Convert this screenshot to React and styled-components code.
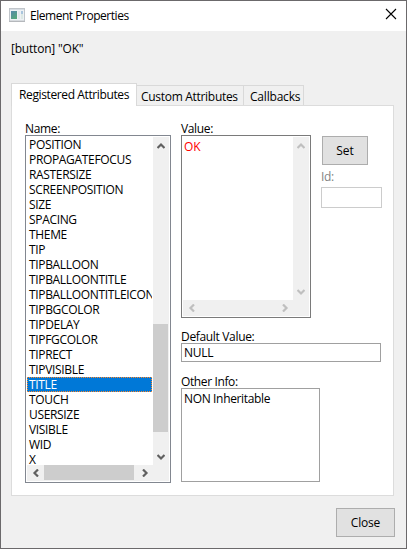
import React from "react";
import styled, { createGlobalStyle } from "styled-components";

const GlobalStyle = createGlobalStyle`
  * { box-sizing: border-box; }
  body { margin: 0; overflow: hidden; }
`;

const Window = styled.div`
  width: 407px;
  height: 549px;
  display: flex;
  flex-direction: column;
  background: #f0f0f0;
  border: 1px solid #6b696b;
  font: 12px/15px "Open Sans", "Noto Sans", sans-serif;
  color: #000;
`;

const Text = styled.span`
  display: block;
  white-space: pre;
  letter-spacing: ${(p) => p.$spacing || 0}px;
`;

const TitleBar = styled.header`
  height: 30px;
  flex: none;
  display: flex;
  align-items: flex-start;
  background: #fff;
  padding: 7px 9px 0 8px;
`;

const WindowTitle = styled(Text)`
  margin: 0 auto 0 5px;
`;

const ElementName = styled(Text)`
  margin: 10px 0 0 10px;
  height: 15px;
`;

const TabStrip = styled.nav`
  display: flex;
  align-items: flex-end;
  margin: 27px 0 0 10px;
  height: 22px;
`;

const Tab = styled.div`
  width: ${(p) => p.$width}px;
  height: ${(p) => (p.$active ? 23 : 20)}px;
  margin-bottom: ${(p) => (p.$active ? -1 : 0)}px;
  padding: 3px 0 0 ${(p) => p.$inset}px;
  background: ${(p) => (p.$active ? "#fff" : "#f0f0f0")};
  border: 1px solid #d9d9d9;
  border-bottom: 0;
  border-left-width: ${(p) => (p.$active ? 1 : 0)}px;
  position: relative;
`;

const Page = styled.main`
  width: 383px;
  height: 391px;
  flex: none;
  margin-left: 10px;
  border: 1px solid #dcdcdc;
  background: #fff;
  display: flex;
  padding: 15px 0 0 13px;
`;

const NameColumn = styled.section`
  width: 156px;
  flex: none;
`;

const DetailColumn = styled.section`
  flex: 1;
  min-width: 0;
`;

const Label = styled(Text)`
  height: 14px;
  line-height: 15px;
  color: ${(p) => (p.$disabled ? "#838383" : "#000")};
`;

const ScrollBox = styled.div`
  display: grid;
  grid-template-columns: 1fr 16px;
  grid-template-rows: 1fr 16px;
  width: ${(p) => p.$width}px;
  height: ${(p) => p.$height}px;
  border: 1px solid ${(p) => p.$border};
  padding: 1px;
  background: #fff;
`;

const List = styled.ul`
  list-style: none;
  margin: 0;
  padding: 0;
  overflow: hidden;
  min-width: 0;
  min-height: 0;
`;

const Item = styled.li`
  height: 15px;
  width: 125px;
  overflow: hidden;
  padding-left: 2px;
  color: ${(p) => (p.$selected ? "#fff" : "#000")};
  background: ${(p) => (p.$selected ? "#0078d7" : "transparent")};
  outline: ${(p) => (p.$selected ? "1px dotted #ff8728" : "none")};
  outline-offset: -1px;
`;

const VerticalBar = styled.div`
  display: flex;
  flex-direction: column;
  justify-content: space-between;
  align-items: flex-start;
  background: #f0f0f0;
  color: ${(p) => (p.$disabled ? "#bfbfbf" : "#606060")};
`;

const HorizontalBar = styled.div`
  display: flex;
  justify-content: space-between;
  align-items: flex-start;
  background: #f0f0f0;
  color: ${(p) => (p.$disabled ? "#bfbfbf" : "#606060")};
`;

const ArrowSlot = styled.span`
  width: ${(p) => (p.$vertical ? 15 : 17)}px;
  height: ${(p) => (p.$vertical ? 17 : 15)}px;
  flex: none;
  display: flex;
  align-items: center;
  justify-content: center;
`;

const VerticalThumb = styled.div`
  width: 15px;
  height: 108px;
  margin: 170px 0 auto;
  background: #cdcdcd;
`;

const HorizontalThumb = styled.div`
  width: 90px;
  height: 15px;
  margin-right: auto;
  background: #cdcdcd;
`;

const Corner = styled.div`
  background: #f0f0f0;
`;

const ValueText = styled(Text)`
  padding: 2px 0 0 1px;
  color: #ff0000;
`;

const ValueRow = styled.div`
  display: flex;
`;

const ValueField = styled.div`
  width: 140px;
  flex: none;
`;

const ValueActions = styled.div`
  padding-top: 15px;
`;

const Button = styled.button`
  width: ${(p) => p.$width}px;
  height: 29px;
  display: flex;
  justify-content: center;
  align-items: center;
  padding: 0 0 1px;
  border: 1px solid #adadad;
  border-radius: 0;
  background: #e1e1e1;
  color: #000;
  font: inherit;
`;

const SetButton = styled(Button)`
  margin: 0 0 4px 1px;
`;

const Field = styled.div`
  width: ${(p) => p.$width}px;
  height: ${(p) => p.$height}px;
  border: 1px solid ${(p) => (p.$disabled ? "#cccccc" : "#a0a0a0")};
  padding: ${(p) => p.$top || 1}px 0 0 2px;
`;

const IdLabel = styled(Label)`
  height: 18px;
`;

const DefaultLabel = styled(Label)`
  margin-top: 11px;
`;

const InfoLabel = styled(Label)`
  margin-top: 12px;
`;

const Footer = styled.footer`
  display: flex;
  justify-content: flex-end;
  padding: 12px 11px 0 0;
`;

const ARROWS = {
  up: "M0.5 6 L4 2.5 L7.5 6",
  down: "M0.5 2 L4 5.5 L7.5 2",
  left: "M6 0.5 L2.5 4 L6 7.5",
  right: "M2 0.5 L5.5 4 L2 7.5",
};

function Arrow({ dir }) {
  return (
    <ArrowSlot $vertical={dir === "up" || dir === "down"}>
      <svg width="8" height="8" viewBox="0 0 8 8">
        <path d={ARROWS[dir]} fill="none" stroke="currentColor" strokeWidth="2.2" />
      </svg>
    </ArrowSlot>
  );
}

function AppIcon() {
  return (
    <svg width="16" height="14" viewBox="0 0 16 14">
      <defs>
        <linearGradient id="pane" x1="0" y1="0" x2="0.6" y2="1">
          <stop offset="0" stopColor="#5688ab" />
          <stop offset="1" stopColor="#55a67c" />
        </linearGradient>
      </defs>
      <rect x="0.5" y="0.5" width="15" height="12.5" fill="#edf1f4" stroke="#c0c5ca" />
      <rect x="1" y="1" width="14" height="1" fill="#d7dde3" />
      <rect x="2" y="3" width="6" height="8" fill="url(#pane)" />
      <rect x="9" y="3" width="2" height="8" fill="#e2e7eb" />
      <rect x="12" y="3" width="2" height="3" fill="#a9c5dd" />
      <rect x="12" y="6" width="2" height="5" fill="#dce8e4" />
      <rect x="0" y="13" width="16" height="1" fill="#b5b8bc" />
    </svg>
  );
}

function CloseIcon() {
  return (
    <svg width="12" height="12" viewBox="0 0 12 12">
      <path d="M1 1 L11 11 M11 1 L1 11" stroke="#000" strokeWidth="1.1" />
    </svg>
  );
}

const ATTRIBUTES = [
  "POSITION", "PROPAGATEFOCUS", "RASTERSIZE", "SCREENPOSITION", "SIZE", "SPACING",
  "THEME", "TIP", "TIPBALLOON", "TIPBALLOONTITLE", "TIPBALLOONTITLEICON",
  "TIPBGCOLOR", "TIPDELAY", "TIPFGCOLOR", "TIPRECT", "TIPVISIBLE", "TITLE",
  "TOUCH", "USERSIZE", "VISIBLE", "WID", "X",
];

export default function App() {
  return (
    <Window>
      <GlobalStyle />
      <TitleBar>
        <AppIcon />
        <WindowTitle $spacing={-0.47}>Element Properties</WindowTitle>
        <CloseIcon />
      </TitleBar>
      <ElementName $spacing={-0.2}>[button] "OK"</ElementName>
      <TabStrip>
        <Tab $active $width={126} $inset={7}>
          <Text $spacing={-0.38}>Registered Attributes</Text>
        </Tab>
        <Tab $width={107} $inset={4}>
          <Text $spacing={-0.3}>Custom Attributes</Text>
        </Tab>
        <Tab $width={60} $inset={6}>
          <Text $spacing={-0.2}>Callbacks</Text>
        </Tab>
      </TabStrip>
      <Page>
        <NameColumn>
          <Label $spacing={-0.35}>Name:</Label>
          <ScrollBox $width={146} $height={348} $border="#828790">
            <List>
              {ATTRIBUTES.map((name) => (
                <Item key={name} $selected={name === "TITLE"}>
                  <Text $spacing={-0.33}>{name}</Text>
                </Item>
              ))}
            </List>
            <VerticalBar>
              <Arrow dir="up" />
              <VerticalThumb />
              <Arrow dir="down" />
            </VerticalBar>
            <HorizontalBar>
              <Arrow dir="left" />
              <HorizontalThumb />
              <Arrow dir="right" />
            </HorizontalBar>
            <Corner />
          </ScrollBox>
        </NameColumn>
        <DetailColumn>
          <ValueRow>
            <ValueField>
              <Label $spacing={-0.35}>Value:</Label>
              <ScrollBox $width={130} $height={183} $border="#7a7a7a">
                <ValueText $spacing={-0.2}>OK</ValueText>
                <VerticalBar $disabled>
                  <Arrow dir="up" />
                  <Arrow dir="down" />
                </VerticalBar>
                <HorizontalBar $disabled>
                  <Arrow dir="left" />
                  <Arrow dir="right" />
                </HorizontalBar>
                <Corner />
              </ScrollBox>
            </ValueField>
            <ValueActions>
              <SetButton $width={46}>Set</SetButton>
              <IdLabel $disabled $spacing={-0.3}>Id:</IdLabel>
              <Field $disabled $width={61} $height={21} />
            </ValueActions>
          </ValueRow>
          <DefaultLabel $spacing={-0.33}>Default Value:</DefaultLabel>
          <Field $width={200} $height={19}>
            <Text $spacing={-0.3}>NULL</Text>
          </Field>
          <InfoLabel $spacing={-0.38}>Other Info:</InfoLabel>
          <Field $width={139} $height={94} $top={2}>
            <Text $spacing={-0.35}>NON Inheritable</Text>
          </Field>
        </DetailColumn>
      </Page>
      <Footer>
        <Button $width={59}>
          <Text $spacing={-0.2}>Close</Text>
        </Button>
      </Footer>
    </Window>
  );
}
